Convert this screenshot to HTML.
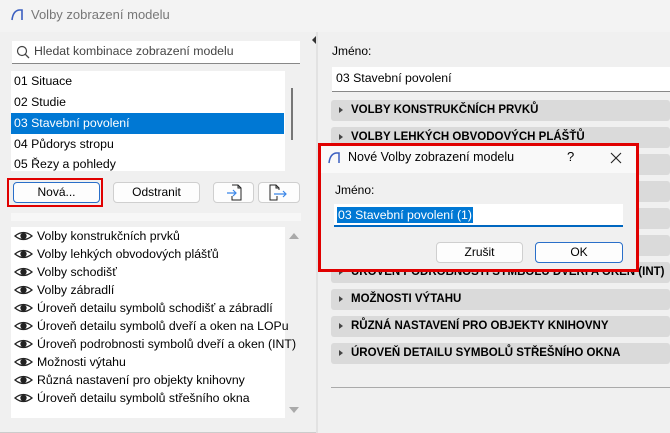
<!DOCTYPE html>
<html><head><meta charset="utf-8"><style>
*{box-sizing:border-box;margin:0;padding:0}
body{width:670px;height:433px;overflow:hidden;background:#f0f0f0;font-family:"Segoe UI","Liberation Sans",sans-serif;font-size:12px;color:#000;position:relative}
.a{position:absolute}
.t{white-space:nowrap}
.btn{position:absolute;background:#fdfdfd;border:1px solid #cfcfcf;border-radius:4px;text-align:center;line-height:19px;font-size:12px}
.bar{position:absolute;left:331px;width:339px;height:21px;background:#dadada;border-radius:3px;font-weight:bold;font-size:11.5px;line-height:21px;padding-left:20px;white-space:nowrap}
.bar:before{content:"";position:absolute;left:8px;top:7px;border-left:4px solid #444;border-top:3.5px solid transparent;border-bottom:3.5px solid transparent}
.li{position:absolute;left:14px;white-space:nowrap;font-size:12.3px}
.it{position:absolute;left:26px;white-space:nowrap;font-size:12.3px;line-height:18px}
</style></head><body>
<div class="a" style="left:0;top:0;width:670px;height:32px;background:#f3f3f3"></div>
<svg class="a" style="left:10px;top:8px" width="14" height="14"><path d="M2 12 Q3 3 9 2 L12 2 L12 12" fill="none" stroke="#3b5fc0" stroke-width="1.6"/></svg>
<div class="a t" style="left:31px;top:7px;font-size:13px;color:#777">Volby zobrazení modelu</div>
<div class="a" style="left:0;top:32px;width:316px;height:401px;background:#f0f0f0;border-bottom:1px solid #ccc"></div>
<div class="a" style="left:316px;top:32px;width:2px;height:401px;background:#e2e2e2"></div>
<div class="a" style="left:312px;top:36px;border-right:4px solid #333;border-top:4px solid transparent;border-bottom:4px solid transparent"></div>
<div class="a" style="left:12px;top:41px;width:288px;height:23px;background:#fff;border-bottom:1px solid #888"></div>
<svg class="a" style="left:16px;top:45px" width="14" height="14"><circle cx="6" cy="6" r="4.5" fill="none" stroke="#444" stroke-width="1.2"/><path d="M9.3 9.3 L13 13" stroke="#444" stroke-width="1.3"/></svg>
<div class="a t" style="left:34px;top:44px;color:#444;font-size:12.3px">Hledat kombinace zobrazení modelu</div>
<div class="a" style="left:11px;top:71px;width:274px;height:100px;background:#fff;overflow:hidden">
<div class="li" style="top:3px;left:3px">01 Situace</div>
<div class="li" style="top:24px;left:3px">02 Studie</div>
<div style="position:absolute;left:0;top:42px;width:273px;height:21px;background:#0078d4"></div>
<div class="li" style="top:45px;left:3px;color:#fff">03 Stavební povolení</div>
<div class="li" style="top:66px;left:3px">04 Půdorys stropu</div>
<div class="li" style="top:86px;left:3px">05 Řezy a pohledy</div>
</div>
<div class="a" style="left:291px;top:88px;width:2px;height:52px;background:#777"></div>
<div class="a" style="left:7px;top:178px;width:96px;height:29px;border:2px solid #e00000"></div>
<div class="btn" style="left:13px;top:182px;width:87px;height:21px;border-color:#2a6fc9">Nová...</div>
<div class="btn" style="left:113px;top:182px;width:87px;height:21px">Odstranit</div>
<div class="btn" style="left:213px;top:182px;width:41px;height:21px"></div>
<div class="btn" style="left:258px;top:182px;width:42px;height:21px"></div>
<svg class="a" style="left:226px;top:184px" width="18" height="17"><path d="M6 1 H12 L15 4 V16 H6 V12" fill="none" stroke="#222" stroke-width="1"/><path d="M12 1 V4 H15" fill="none" stroke="#222"/><path d="M1 9 H10 M7 6 L10 9 L7 12" fill="none" stroke="#3a86e8" stroke-width="1.2"/></svg>
<svg class="a" style="left:269px;top:184px" width="20" height="17"><path d="M8 12 V16 H1 V1 H7 L10 4 V6" fill="none" stroke="#222" stroke-width="1"/><path d="M7 1 V4 H10" fill="none" stroke="#222"/><path d="M5 10 H17 M14 7 L17 10 L14 13" fill="none" stroke="#3a86e8" stroke-width="1.2"/></svg>
<div class="a" style="left:11px;top:213px;width:290px;height:8px;background:#f7f7f7"></div>
<div class="a" style="left:11px;top:227px;width:274px;height:191px;background:#fff">
<svg style="position:absolute;left:0;top:0" width="26" height="190">
<g fill="none" stroke="#222" stroke-width="1.3">
<g id="e"><path d="M4 9 Q12.5 2 21 9 Q12.5 16 4 9Z"/><circle cx="12.5" cy="9" r="2.5" fill="#222"/></g>
<use href="#e" y="18"/><use href="#e" y="36"/><use href="#e" y="54"/><use href="#e" y="72"/><use href="#e" y="90"/><use href="#e" y="108"/><use href="#e" y="126"/><use href="#e" y="144"/><use href="#e" y="162"/>
</g></svg>
<div class="it" style="top:0px">Volby konstrukčních prvků</div>
<div class="it" style="top:18px">Volby lehkých obvodových plášťů</div>
<div class="it" style="top:36px">Volby schodišť</div>
<div class="it" style="top:54px">Volby zábradlí</div>
<div class="it" style="top:72px">Úroveň detailu symbolů schodišť a zábradlí</div>
<div class="it" style="top:90px">Úroveň detailu symbolů dveří a oken na LOPu</div>
<div class="it" style="top:108px">Úroveň podrobnosti symbolů dveří a oken (INT)</div>
<div class="it" style="top:126px">Možnosti výtahu</div>
<div class="it" style="top:144px">Různá nastavení pro objekty knihovny</div>
<div class="it" style="top:162px">Úroveň detailu symbolů střešního okna</div>
</div>
<div class="a" style="left:289px;top:233px;border-bottom:6px solid #aaa;border-left:5px solid transparent;border-right:5px solid transparent"></div>
<div class="a" style="left:289px;top:407px;border-top:6px solid #aaa;border-left:5px solid transparent;border-right:5px solid transparent"></div>

<div class="a t" style="left:332px;top:44px">Jméno:</div>
<div class="a" style="left:332px;top:67px;width:338px;height:25px;background:#fff;border-bottom:1px solid #888"></div>
<div class="a t" style="left:336px;top:71px;font-size:12.3px">03 Stavební povolení</div>
<div class="bar" style="top:100px">VOLBY KONSTRUKČNÍCH PRVKŮ</div>
<div class="bar" style="top:127px">VOLBY LEHKÝCH OBVODOVÝCH PLÁŠŤŮ</div>
<div class="bar" style="top:154px"></div>
<div class="bar" style="top:181px"></div>
<div class="bar" style="top:208px"></div>
<div class="bar" style="top:235px"></div>
<div class="bar" style="top:262px">ÚROVEŇ PODROBNOSTI SYMBOLŮ DVEŘÍ A OKEN (INT)</div>
<div class="bar" style="top:289px">MOŽNOSTI VÝTAHU</div>
<div class="bar" style="top:316px">RŮZNÁ NASTAVENÍ PRO OBJEKTY KNIHOVNY</div>
<div class="bar" style="top:343px">ÚROVEŇ DETAILU SYMBOLŮ STŘEŠNÍHO OKNA</div>
<div class="a" style="left:331px;top:387px;width:339px;height:1px;background:#aaa"></div>

<div class="a" style="left:320px;top:145px;width:316px;height:124px;background:#f0f0f0"></div>
<div class="a" style="left:320px;top:145px;width:316px;height:28px;background:#f9f9f9"></div>
<div class="a" style="left:318px;top:143px;width:321px;height:129px;border:3px solid #e00000"></div>
<svg class="a" style="left:328px;top:151px" width="13" height="13"><path d="M1 12 Q2 3 8 2 L11 2 L11 12" fill="none" stroke="#3b5fc0" stroke-width="1.5"/></svg>
<div class="a t" style="left:348px;top:150px;font-size:12.5px">Nové Volby zobrazení modelu</div>
<div class="a t" style="left:567px;top:149px;font-size:13px">?</div>
<svg class="a" style="left:610px;top:152px" width="12" height="12"><path d="M1 1 L11 11 M11 1 L1 11" stroke="#222" stroke-width="1.1"/></svg>
<div class="a t" style="left:335px;top:183px">Jméno:</div>
<div class="a" style="left:334px;top:204px;width:289px;height:23px;background:#fff;border-bottom:2px solid #0067c0"></div>
<div class="a t" style="left:337px;top:207px;background:#0078d4;color:#fff;line-height:16px;padding:0 1px;font-size:12.3px">03 Stavební povolení (1)</div>
<div class="btn" style="left:436px;top:242px;width:87px;height:21px">Zrušit</div>
<div class="btn" style="left:535px;top:242px;width:88px;height:21px;border-color:#2a6fc9">OK</div>
</body></html>
